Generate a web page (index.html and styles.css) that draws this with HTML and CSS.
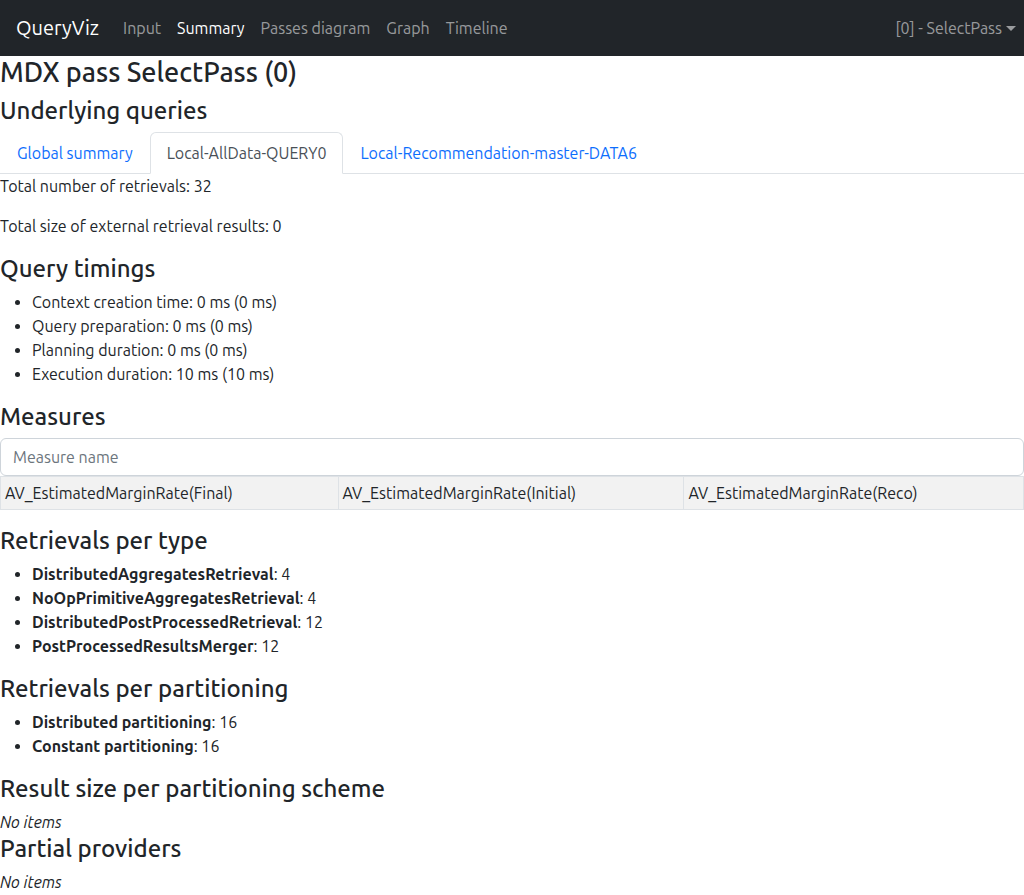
FILE: index.html
```html
<!DOCTYPE html>
<html lang="en">
<head>
<meta charset="utf-8">
<title>QueryViz</title>
<link rel="stylesheet" href="styles.css">
</head>
<body>
<header class="navbar">
  <a class="brand" href="#">QueryViz</a>
  <nav class="nav-links">
    <a class="nav-link" href="#">Input</a>
    <a class="nav-link active" href="#">Summary</a>
    <a class="nav-link" href="#">Passes diagram</a>
    <a class="nav-link" href="#">Graph</a>
    <a class="nav-link" href="#">Timeline</a>
  </nav>
  <button class="pass-menu" type="button">[0] - SelectPass</button>
</header>
<main>
  <h3 class="page-title">MDX pass SelectPass (0)</h3>
  <h4 class="heading">Underlying queries</h4>
  <div class="tabs" role="tablist">
    <button class="tab" type="button" role="tab">Global summary</button>
    <button class="tab selected" type="button" role="tab" aria-selected="true">Local-AllData-QUERY0</button>
    <button class="tab" type="button" role="tab">Local-Recommendation-master-DATA6</button>
  </div>
  <p class="total">Total number of retrievals: 32</p>
  <p class="total">Total size of external retrieval results: 0</p>
  <h4 class="heading">Query timings</h4>
  <ul class="list">
    <li>Context creation time: 0 ms (0 ms)</li>
    <li>Query preparation: 0 ms (0 ms)</li>
    <li>Planning duration: 0 ms (0 ms)</li>
    <li>Execution duration: 10 ms (10 ms)</li>
  </ul>
  <h4 class="heading">Measures</h4>
  <input class="search" type="text" placeholder="Measure name" aria-label="Measure name">
  <table class="measures">
    <tbody>
      <tr>
        <td>AV_EstimatedMarginRate(Final)</td>
        <td>AV_EstimatedMarginRate(Initial)</td>
        <td>AV_EstimatedMarginRate(Reco)</td>
      </tr>
    </tbody>
  </table>
  <h4 class="heading">Retrievals per type</h4>
  <ul class="list">
    <li><b>DistributedAggregatesRetrieval</b>: 4</li>
    <li><b>NoOpPrimitiveAggregatesRetrieval</b>: 4</li>
    <li><b>DistributedPostProcessedRetrieval</b>: 12</li>
    <li><b>PostProcessedResultsMerger</b>: 12</li>
  </ul>
  <h4 class="heading">Retrievals per partitioning</h4>
  <ul class="list">
    <li><b>Distributed partitioning</b>: 16</li>
    <li><b>Constant partitioning</b>: 16</li>
  </ul>
  <h4 class="heading">Result size per partitioning scheme</h4>
  <div class="empty">No items</div>
  <h4 class="heading">Partial providers</h4>
  <div class="empty">No items</div>
</main>
</body>
</html>
```
FILE: styles.css
```css
*, *::before, *::after { box-sizing: border-box; }
body {
  margin: 0;
  font-family: Ubuntu, "Noto Sans", "Liberation Sans", sans-serif;
  font-size: 16px;
  line-height: 24px;
  color: #212529;
  background: #fff;
}
button, input { font: inherit; }
.navbar {
  display: flex;
  align-items: center;
  padding: 8px 8px 8px 16px;
  background: #212529;
}
.brand {
  margin-right: 16px;
  font-size: 20px;
  line-height: 30px;
  color: #fff;
  text-decoration: none;
}
.nav-links { display: flex; flex: 1; }
.nav-link {
  padding: 8px;
  color: rgba(255, 255, 255, .55);
  text-decoration: none;
  white-space: nowrap;
}
.nav-link.active { color: #fff; }
.pass-menu {
  display: flex;
  align-items: center;
  gap: 4px;
  padding: 8px 0;
  border: 0;
  background: none;
  color: rgba(255, 255, 255, .55);
}
.pass-menu::after {
  content: "";
  border: 5px solid transparent;
  border-top-color: currentColor;
  border-bottom: 0;
}
.page-title, .heading { margin: 0; font-weight: 560; }
.page-title {
  margin-bottom: 8px;
  font-size: 27px;
  line-height: 32px;
}
.heading {
  margin-bottom: 7px;
  font-size: 24px;
  line-height: 29px;
}
.tabs { display: flex; border-bottom: 1px solid #dee2e6; }
.tab {
  margin-bottom: -1px;
  padding: 8px 16px;
  border: 1px solid transparent;
  border-radius: 6px 6px 0 0;
  background: none;
  color: #0d6efd;
  white-space: nowrap;
}
.tab.selected {
  border-color: #dee2e6 #dee2e6 #fff;
  background: #fff;
  color: #495057;
}
.total { margin: 0 0 16px; }
.list { margin: 0 0 16px; padding-left: 32px; }
.search {
  display: block;
  width: 100%;
  padding: 6px 12px;
  border: 1px solid #ced4da;
  border-radius: 6px;
  color: #212529;
  background: #fff;
}
.search::placeholder { color: #6c757d; opacity: 1; }
.measures {
  width: 100%;
  margin-bottom: 16px;
  border-collapse: collapse;
}
.measures td {
  padding: 4px;
  border: 1px solid #dee2e6;
  background: #f2f2f2;
}
.empty { font-style: italic; }
```
